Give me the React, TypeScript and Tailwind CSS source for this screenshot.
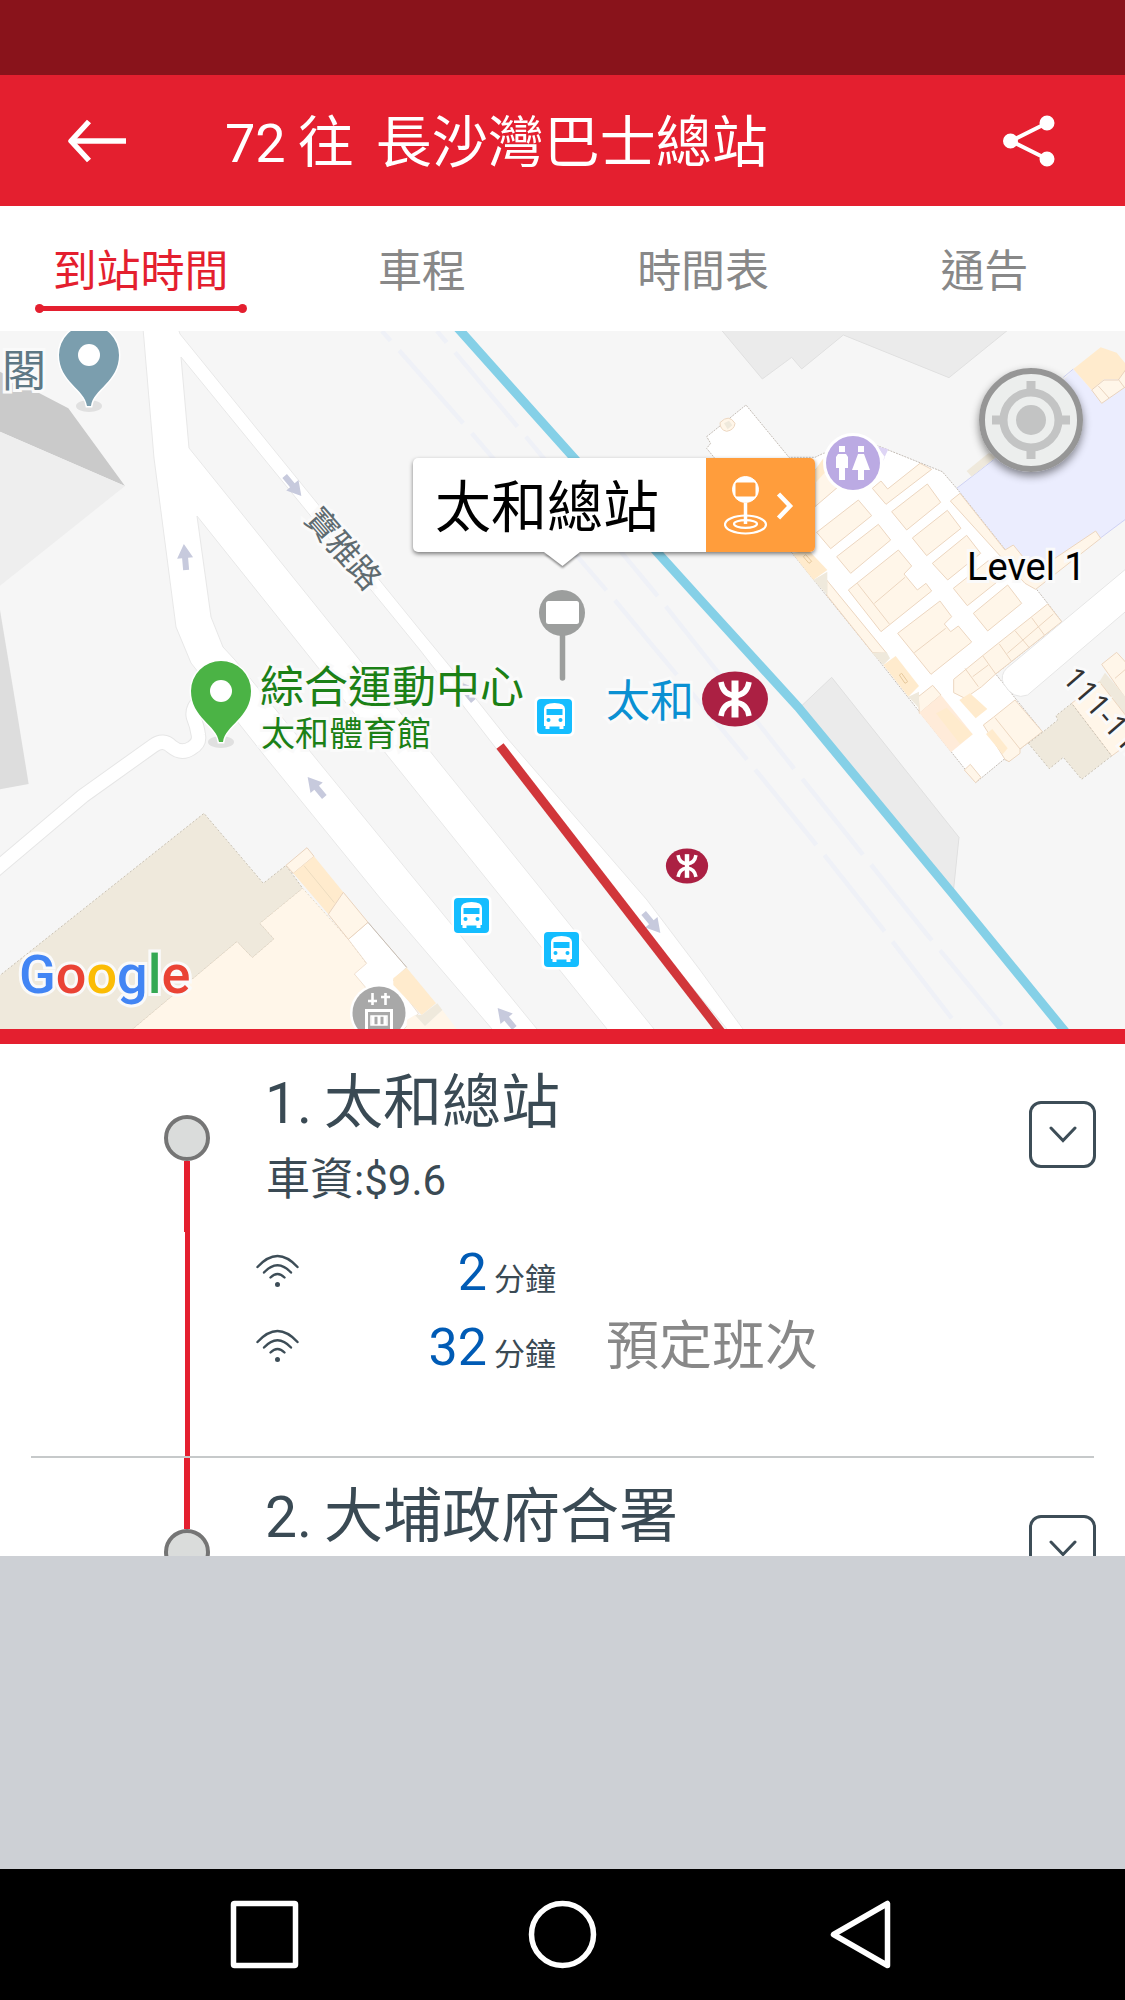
import type { ReactNode } from "react";

const CJK = "font-['Roboto','Noto_Sans_CJK_TC',sans-serif]";
const HALO = "absolute whitespace-nowrap [paint-order:stroke_fill] [-webkit-text-stroke:6px_#fafafa]";

const tabs = ["到站時間", "車程", "時間表", "通告"];

type Arrival = { minutes: number; note?: string };
type Stop = { index: number; name: string; fare?: string; arrivals: Arrival[] };

const stops: Stop[] = [
  {
    index: 1,
    name: "太和總站",
    fare: "$9.6",
    arrivals: [{ minutes: 2 }, { minutes: 32, note: "預定班次" }],
  },
  { index: 2, name: "大埔政府合署", arrivals: [] },
];

function Header() {
  return (
    <header className="flex h-[131px] items-center bg-[#e41f2f] pl-[68px] pr-[70px] text-white">
      <button type="button" aria-label="返回" className="shrink-0">
        <svg width="58" height="44" viewBox="0 0 58 44" fill="none" stroke="currentColor" strokeWidth="5.500">
          <path d="M21 2.500 3 22 21 41.500" strokeLinejoin="round" />
          <path d="M3 22H58" />
        </svg>
      </button>
      <h1 className="ml-[99px] flex flex-1 items-baseline gap-3 pt-[6px] text-[56px] leading-[72px]">
        <span className="text-[54px]">72</span>
        <span>往</span>
        <span className="ml-[10px]">長沙灣巴士總站</span>
      </h1>
      <button type="button" aria-label="分享" className="shrink-0">
        <svg width="53" height="52" viewBox="0 0 53 52" fill="currentColor" stroke="currentColor" strokeWidth="4">
          <path d="M45 8 9 26 45 44" fill="none" />
          <circle cx="8.500" cy="26" r="5.500" />
          <circle cx="45" cy="8" r="5.500" />
          <circle cx="45" cy="44" r="5.500" />
        </svg>
      </button>
    </header>
  );
}

function Tabs() {
  return (
    <nav className="grid h-[125px] grid-cols-4 bg-white">
      {tabs.map((tab, i) => (
        <button
          key={tab}
          type="button"
          className={
            i === 0
              ? "flex flex-col items-center pt-9 text-[44px] leading-[60px] text-[#e41f2f]"
              : "flex flex-col items-center pt-9 text-[44px] leading-[60px] text-[#888888]"
          }
        >
          {tab}
          {i === 0 && (
            <span className="mt-[2px] flex items-center">
              <span className="size-[9px] rounded-full bg-[#e41f2f]" />
              <span className="-mx-1 h-[5px] w-[202px] bg-[#e41f2f]" />
              <span className="size-[9px] rounded-full bg-[#e41f2f]" />
            </span>
          )}
        </button>
      ))}
    </nav>
  );
}

function Tile({ x, y, children }: { x: number; y: number; children: ReactNode }) {
  return <g transform={`translate(${x} ${y}) scale(0.33333)`}>{children}</g>;
}

function BusMark({ x, y }: { x: number; y: number }) {
  return (
    <g transform={`translate(${x} ${y})`}>
      <rect x="-2.500" y="-2.500" width="40" height="40" rx="5" fill="#fff" />
      <rect width="35" height="35" rx="4" fill="#14bdff" />
      <path
        d="M7 10Q7 4 17.500 4T28 10V27H26.500V30H22.500V27.500H12.500V30H8.500V27H7Z"
        fill="#fff"
      />
      <rect x="9.500" y="10" width="16" height="6" fill="#14bdff" />
      <circle cx="11.500" cy="21" r="2" fill="#14bdff" />
      <circle cx="23.500" cy="21" r="2" fill="#14bdff" />
    </g>
  );
}

function MtrMark({ x, y, k }: { x: number; y: number; k: number }) {
  return (
    <g transform={`translate(${x} ${y}) scale(${k})`}>
      <ellipse rx="33" ry="27.500" fill="#ab2043" />
      <g fill="none" stroke="#fff">
        <path d="M0-18.500V18.500" strokeWidth="7" />
        <path d="M-14-17Q-12-4 0-3.500 12-4 14-17M-14 17Q-12 4 0 3.500 12 4 14 17" strokeWidth="5.500" />
      </g>
    </g>
  );
}

function PlacePin({ x, y, color }: { x: number; y: number; color: string }) {
  return (
    <g transform={`translate(${x} ${y})`}>
      <ellipse cx="0" cy="51" rx="13" ry="6" fill="#e0e0e0" />
      <path
        d="M-30 0A30 30 0 0 1 30 0C30 27 4 34 2 51H-2C-4 34-30 27-30 0Z"
        fill={color}
        stroke="#fff"
        strokeWidth="3"
        paintOrder="stroke"
      />
      <circle r="11" fill="#fff" />
    </g>
  );
}

function FlowArrow({ x, y, r }: { x: number; y: number; r: number }) {
  return (
    <path
      transform={`translate(${x} ${y}) rotate(${r})`}
      d="M0-13 8 1H3V13H-3V1H-8Z"
      fill="#c7cadd"
    />
  );
}

function MapArt() {
  return (
    <svg
      className="absolute inset-0 h-full w-full"
      viewBox="0 331 1125 698"
      preserveAspectRatio="xMinYMin slice"
      aria-hidden="true"
    >
      <rect y="331" width="1125" height="698" fill="#f6f6f6" />

      {/* grey buildings, west side */}
      <Tile x={0} y={320}>
        <path d="M0 155 110 215 205 265 375 498 0 335Z" fill="#cacaca" />
        <path d="M0 335 375 498 0 797Z" fill="#eeeeee" />
        <path d="M0 870 40 1110 86 1392 0 1408Z" fill="#dddddd" />
      </Tile>

      {/* footpath and roads */}
      <Tile x={0} y={680}>
        <g fill="none" strokeLinejoin="round">
          <path d="M-20 575 250 347 460 197Q490 175 515 200 545 225 575 204 600 190 595 165 592 140 580 110 575 85 600 60" stroke="#e6e6e6" strokeWidth="46" />
          <path d="M-20 575 250 347 460 197Q490 175 515 200 545 225 575 204 600 190 595 165 592 140 580 110 575 85 600 60" stroke="#fff" strokeWidth="40" />
        </g>
      </Tile>
      <path
        d="M143 328 154 458 176 627 191 663 267 759 380 898 492 1029 500 1040H546L537 1029 380 837 313 755 235 660 223 647 211 617 197 516 320 670 387 755 607 1029 616 1040H663L654 1029 433 755 362 663 189 448 181 357 420 650 495 747 600 877 727 1029 735 1040H751L743 1029 700 970 647 900 507 738 457 675 420 630 180 334 178 328Z"
        fill="#fff"
        stroke="#e8e8e8"
      />

      {/* south-west mall */}
      <Tile x={0} y={680}>
        <path d="M-5 890 612 400 790 610 858 556 908 625 780 730 822 777 757 833 711 785 395 1050H-5Z" fill="#efe9dc" stroke="#c9c2b5" strokeWidth="3" strokeDasharray="6 6" />
        <path d="M395 1050 711 785 757 833 822 777 780 730 908 625 1045 778 1250 1050Z" fill="#fff6e9" stroke="#e6d9c6" strokeWidth="3" strokeDasharray="6 6" />
        <path d="M1045 778 1104 727 1220 862 1180 900 1255 1000 1210 1050H1140L1095 920 1063 882 1100 850Z" fill="#fff" stroke="#e9d3be" strokeWidth="2" />
        <path d="M858 556 921 503 942 529 880 580Z" fill="#fff6e9" stroke="#e9d3be" strokeWidth="3" />
        <path d="M880 580 942 529 1030 637 985 703Z" fill="#ffebcd" />
        <path d="M985 703 1030 637 1104 727 1045 778Z" fill="#fff6e9" stroke="#e9d3be" strokeWidth="3" />
        <path d="M912 557 1003 668" stroke="#ecdcc0" strokeWidth="3" />
        <path d="M1104 727 1220 862" stroke="#c4bdb6" strokeWidth="3" />
      </Tile>
      <Tile x={380} y={680}>
        <path d="M105 1005 135 1038 187 990 232 1050H80V1020Z" fill="#fff6e9" />
        <path d="M125 1005 172 970 187 990 135 1038 105 1005Z" fill="#efe9dc" />
        <path d="M40 895 80 863 168 970 125 1005 40 915Z" fill="#ffebcd" />
      </Tile>

      {/* north-east blocks */}
      <Tile x={705} y={320}>
        <path d="M45 25 172 177 260 112 290 147 415 45 732 173 915 25Z" fill="#ebebeb" stroke="#e0e0e0" strokeWidth="3" />
        <path d="M755 505 865 420 1105 147 1160 210 1190 250 1265 195V598L1185 655 990 805 890 700Z" fill="#ebedfe" />
        <path d="M1075 172 1105 147M755 505 865 420M1265 595 1185 655" stroke="#cfd2f3" strokeWidth="3" />
        <path d="M785 453 850 400 880 405 800 470Z" fill="#efe9dc" />
        <path d="M1105 147 1187 82 1235 98 1265 135V165L1240 178H1197L1160 210Z" fill="#ffebcd" />
        <path d="M1160 210 1197 180H1240L1265 145V198L1190 250ZM1180 198 1212 234M1240 178 1258 202" fill="#fff6e9" stroke="#e9d3be" strokeWidth="3" />
        <path d="M5 350 123 255 252 412H330L355 400 520 378 712 455 755 505 1028 850 1070 905 872 1062 1012 1235 945 1287 912 1325 897 1318 812 1388 503 998 262 700 5 385 17 370Z" fill="#fff" stroke="#c4bdb6" strokeWidth="3" strokeDasharray="6 3" />
        <path d="M515 378 550 388 530 430 540 412Z" fill="#ded5f5" />
        <g fill="#fff6e9" stroke="#ecd6c0" strokeWidth="3">
          <path d="M45 308Q72 280 90 310 88 330 65 334 45 330 45 308Z" />
          <path d="M330 450 365 415 400 500 330 560Z" />
          <path d="M335 637 460 540 500 587 377 686Z" />
          <path d="M395 710 520 613 557 660 437 760Z" />
          <path d="M430 810 580 690 620 738 597 762 637 810 663 790 680 813 528 935ZM457 790 553 912M508 850 600 772" />
          <path d="M578 940 705 843 740 890 718 912 737 935 760 918 800 966 678 1063ZM628 998 722 925" />
          <path d="M502 505 528 483 548 507 645 430 680 448 543 553Z" />
          <path d="M560 575 667 492 707 547 605 630Z" />
          <path d="M622 654 727 571 768 625 665 707Z" />
          <path d="M682 730 785 646 827 700 728 780Z" />
          <path d="M745 805 850 722 890 775 787 857Z" />
          <path d="M805 880 908 795 950 850 848 933Z" />
          <path d="M736 543 765 520 900 690 925 675 990 755 1172 633 1187 655 992 808 960 790Z" />
          <path d="M365 780 545 1000 503 998 365 825Z" />
          <path d="M833 1007 1028 852 1070 905 872 1062 830 1100 780 1135 746 1118V1078ZM883 972 920 1025M930 932 972 982M980 893 1018 945M907 1000 1045 882M780 1045 820 1100M803 1070 850 1035M833 1007 872 1062" />
          <path d="M640 1130 683 1096 708 1125 643 1180Z" />
          <path d="M835 1215 865 1192 930 1140 1012 1235 945 1287V1300L912 1325 900 1318ZM870 1193 945 1287" />
          <path d="M778 1350 796 1333 828 1372 812 1388Z" />
        </g>
        <path d="M643 1178 708 1125 803 1243 738 1297Z" fill="#ffebd9" />
        <g fill="#ffebcd">
          <path d="M262 700 310 690 367 750 325 780Z" />
          <path d="M535 1035 572 1008 642 1098 610 1130Z" />
          <path d="M763 1140 795 1120 847 1167 812 1195Z" />
          <path d="M693 1180 725 1163 803 1243 765 1272Z" />
          <path d="M843 1242 862 1227 908 1285 893 1303Z" />
          <path d="M330 450 355 415 362 455 330 490Z" />
        </g>
        <g fill="#efe9dc">
          <path d="M325 780 367 755V825Z" />
          <path d="M500 998 545 997 555 1015 535 1035Z" />
          <path d="M610 1130 642 1115V1165Z" />
          <path d="M57 310 72 302 82 316 68 328Z" />
        </g>
        <path d="M583 1065 590 1060 608 1085 600 1090ZM295 710 302 704 320 724 312 730Z" fill="none" stroke="#e6c89c" strokeWidth="3" />
      </Tile>
      <Tile x={705} y={600}>
        <path d="M1265-95 905 205Q885 225 895 250 925 302 968 285L1265 32Z" fill="#fff" stroke="#e6e6e6" strokeWidth="3" />
        <path d="M285 322 380 232 762 712 745 875Z" fill="#ebebeb" stroke="#e0e0e0" strokeWidth="3" />
        <path d="M1190 193 1235 157 1265 190V300ZM1230 235 1265 205" fill="#fff6e9" stroke="#ecd6c0" strokeWidth="3" />
        <path d="M1183 245 1200 218 1265 295V350Z" fill="#efe9dc" />
        <path d="M1100 310 1183 245 1265 350V435L1220 468Z" fill="#fff6e9" stroke="#ecd6c0" strokeWidth="3" />
        <path d="M970 430 1015 395 1058 360 1053 347 1100 310 1220 468 1130 538 1075 472 1033 506Z" fill="#efe9dc" stroke="#c9c2b5" strokeWidth="3" strokeDasharray="6 6" />
      </Tile>

      {/* railway */}
      <g fill="none" stroke="#eff1f7" strokeWidth="4.500">
        <path d="M382 331 463 423 613 598 745 757 814 842 882 928 960 1029" strokeDasharray="97 13" strokeDashoffset="84" />
        <path d="M437 331 517 426 656 594 792 766 860 851 929 937 1005 1029" strokeDasharray="97 13" strokeDashoffset="82" />
      </g>
      <path d="M456 326 574 458 657 552 705 605 798 707 952 893 1072 1040" fill="none" stroke="#85d0e7" strokeWidth="9" />

      <FlowArrow x={293} y={486} r={140} />
      <FlowArrow x={185} y={557} r={-5} />
      <FlowArrow x={316} y={787} r={-40} />
      <FlowArrow x={506} y={1018} r={-40} />
      <FlowArrow x={465} y={691} r={-40} />
      <FlowArrow x={652} y={923} r={140} />

      <path d="M500 746 728 1041" stroke="#d1363a" strokeWidth="9" />

      <PlacePin x={89} y={355} color="#7b9eae" />
      <PlacePin x={221} y={691} color="#4bb345" />

      <BusMark x={537} y={699} />
      <BusMark x={454} y={898} />
      <BusMark x={544} y={932} />
      <MtrMark x={735} y={699} k={1} />
      <MtrMark x={687} y={866} k={0.64} />

      {/* restroom marker */}
      <g transform="translate(853 463)">
        <circle r="30" fill="#fff" />
        <circle r="27" fill="#bbaae3" />
        <g fill="#fff">
          <rect x="-14" y="-17" width="6" height="6" />
          <path d="M-15-9H-7L-5-6V5H-8V17H-14V5H-17V-6Z" />
          <rect x="5" y="-17" width="6" height="6" />
          <path d="M5-9H11L17 7H11V17H5V7H-1Z" />
        </g>
      </g>

      {/* columbarium marker */}
      <g transform="translate(379 1013)">
        <circle r="29" fill="#fff" />
        <circle r="26.500" fill="#a8a8a8" />
        <g fill="none" stroke="#fff">
          <path d="M-6.500-20V-8M-11-12H-2M6.500-20V-8M2-16H11" strokeWidth="2.600" />
          <path d="M-12.500 16V-2.500H12.500V16" strokeWidth="3" />
          <path d="M-6 3V12M0 3V12M6 3V12" strokeWidth="3" />
          <path d="M-8 3H8V12H-8Z" strokeWidth="1.500" />
        </g>
      </g>

      {/* selected stop pole */}
      <path d="M562.500 630V678" stroke="#9c9e9d" strokeWidth="5.500" strokeLinecap="round" />
      <circle cx="562" cy="613" r="23" fill="#9c9e9d" />
      <rect x="546" y="601" width="33" height="23" rx="2.500" fill="#fff" />
    </svg>
  );
}

function StopMap() {
  return (
    <section aria-label="地圖" className="relative h-[698px] overflow-hidden bg-[#f6f6f6]">
      <MapArt />
      <span className={`${HALO} left-[2px] top-[11px] text-[44px] leading-[60px] text-[#5e7885]`}>閣</span>
      <span className={`${HALO} left-[295px] top-[196px] rotate-[49deg] text-[32px] leading-[44px] text-[#5f6b70]`}>
        寶雅路
      </span>
      <span className={`${HALO} left-[260px] top-[327px] text-[44px] leading-[60px] text-[#1b8016]`}>
        綜合運動中心
      </span>
      <span className={`${HALO} left-[261px] top-[380px] text-[34px] leading-[46px] text-[#1b8016]`}>太和體育館</span>
      <span className={`${HALO} left-[606px] top-[341px] text-[44px] leading-[60px] text-[#0a90d2]`}>太和</span>
      <span className={`${HALO} left-[967px] top-[212px] text-[38px] leading-[48px] text-black`}>Level 1</span>
      <span
        className={`${HALO} left-[1070px] top-[320px] origin-left rotate-[49deg] font-['Open_Sans',sans-serif] text-[31px] leading-[40px] text-[#333333]`}
      >
        111-112
      </span>
      <span
        aria-label="Google"
        className={`${HALO} left-[19px] top-[608px] text-[54px] font-medium leading-[72px]`}
      >
        <span className="text-[#4285f4]">G</span>
        <span className="text-[#ea4335]">o</span>
        <span className="text-[#fbbc05]">o</span>
        <span className="text-[#4285f4]">g</span>
        <span className="text-[#34a853]">l</span>
        <span className="text-[#ea4335]">e</span>
      </span>

      <button
        type="button"
        aria-label="我的位置"
        className="absolute right-[42px] top-[37px] size-[104px] rounded-full shadow-[0_4px_8px_rgba(0,0,0,0.45)]"
      >
        <svg viewBox="-52 -52 104 104" className="size-full" fill="none">
          <circle r="49" fill="#eceeed" stroke="#969696" strokeWidth="6" />
          <circle r="27.500" stroke="#c3c4c4" strokeWidth="8" />
          <path d="M0-39V-28M0 28V39M-39 0H-28M28 0H39" stroke="#c3c4c4" strokeWidth="9" />
          <circle r="15" fill="#c3c4c4" />
        </svg>
      </button>

      <button
        type="button"
        className="absolute left-[413px] top-[127px] flex h-[94px] items-stretch rounded-[5px] bg-white text-black shadow-[0_2px_4px_rgba(0,0,0,0.5)]"
      >
        <span className="w-[293px] pl-[22px] text-left text-[56px] leading-[100px]">太和總站</span>
        <span className="flex w-[109px] items-center rounded-r-[5px] bg-[#ff9d3c] pl-[18px] text-white">
          <svg width="72" height="62" viewBox="0 0 72 62" fill="none" stroke="currentColor">
            <ellipse cx="21.500" cy="50.500" rx="20.500" ry="9" strokeWidth="2.200" />
            <ellipse cx="21.500" cy="50" rx="11.500" ry="3.800" strokeWidth="2.200" />
            <circle cx="21.500" cy="15.500" r="13" fill="currentColor" strokeWidth="1" />
            <rect x="11.500" y="8.500" width="20" height="14" rx="1.500" fill="#ff9d3c" stroke="none" />
            <path d="M21.500 29V50" strokeWidth="3.500" />
            <path d="M54.500 20 66 32 54.500 44" strokeWidth="4.500" />
          </svg>
        </span>
        <svg
          className="absolute left-[130px] top-full drop-shadow-[0_2px_1px_rgba(0,0,0,0.45)]"
          width="40"
          height="15"
          viewBox="0 0 40 15"
        >
          <path d="M1 0H37L19.500 14Z" fill="#fff" />
        </svg>
      </button>
    </section>
  );
}

function SignalIcon() {
  return (
    <svg className="mb-1 shrink-0 self-center" width="43" height="34" viewBox="0 0 43 34" fill="none" stroke="#3d4d57" strokeWidth="2.400" strokeLinecap="round">
      <path d="M1.500 13Q21.500-9 41.500 13" />
      <path d="M8 18.500Q21.500 4 35 18.500" />
      <path d="M14.500 23.500Q21.500 16.500 28.500 23.500" />
      <circle cx="21.500" cy="30.500" r="1.300" fill="#3d4d57" />
    </svg>
  );
}

function StopRow({ stop, first }: { stop: Stop; first: boolean }) {
  return (
    <li className="relative flex h-[414px] pr-[29px]">
      <div className="ml-[164px] flex w-[46px] shrink-0 flex-col items-center">
        <span className={first ? "h-[71px]" : "h-[71px] w-[6px] bg-[#e41f2f]"} />
        <span className="size-[46px] shrink-0 rounded-full border-4 border-[#757575] bg-[#dadcdb]" />
        <span className="h-[71px] w-[6px] bg-[#e41f2f]" />
        <span className="w-[5px] flex-1 bg-[#e41f2f]" />
      </div>
      <div className="ml-[46px] flex-1 pt-[23px] text-[#3a4a54]">
        <h2 className="flex items-baseline gap-3 pl-[9px] text-[59px] leading-[72px]">
          <span className="text-[57px]">{stop.index}.</span>
          <span>{stop.name}</span>
        </h2>
        {stop.fare && (
          <p className="mt-[14px] pl-[10px] text-[44px] leading-[52px]">
            車資<span className="text-[42px]">:{stop.fare}</span>
          </p>
        )}
        <ul className="mt-7">
          {stop.arrivals.map((a) => (
            <li key={a.minutes} className="flex h-[75px] items-baseline leading-[75px]">
              <SignalIcon />
              <span className="w-[188px] text-right text-[52px] text-[#005bb5]">{a.minutes}</span>
              <span className="ml-[7px] text-[31px]">分鐘</span>
              {a.note && <span className="ml-[50px] text-[53px] text-[#888888]">{a.note}</span>}
            </li>
          ))}
        </ul>
      </div>
      <button
        type="button"
        aria-label={`展開 ${stop.name}`}
        className="mt-[57px] flex size-[67px] shrink-0 items-center justify-center rounded-[12px] border-[3px] border-[#3d4d57]"
      >
        <svg width="28" height="17" viewBox="0 0 28 17" fill="none" stroke="#3d4d57" strokeWidth="3" strokeLinecap="round">
          <path d="M2 2 14 14.500 26 2" />
        </svg>
      </button>
      <span className="absolute inset-x-[31px] bottom-0 h-[2px] bg-[#c6c9ca]" />
    </li>
  );
}

function SystemBar() {
  return (
    <footer className="flex h-[131px] items-center justify-between bg-black px-[230px] text-white">
      <button type="button" aria-label="最近使用">
        <svg width="69" height="69" viewBox="0 0 69 69" fill="none" stroke="currentColor" strokeWidth="5.500">
          <rect x="3.500" y="3.500" width="62" height="62" rx="1" />
        </svg>
      </button>
      <button type="button" aria-label="主畫面">
        <svg width="69" height="69" viewBox="0 0 69 69" fill="none" stroke="currentColor" strokeWidth="5.500">
          <circle cx="34.500" cy="34.500" r="31" />
        </svg>
      </button>
      <button type="button" aria-label="上一頁">
        <svg width="69" height="69" viewBox="0 0 69 69" fill="none" stroke="currentColor" strokeWidth="5.500" strokeLinejoin="round">
          <path d="M61.500 3.500V65.500L7.500 34.500Z" />
        </svg>
      </button>
    </footer>
  );
}

export default function App() {
  return (
    <div className={`${CJK} flex min-h-screen flex-col bg-[#cdd0d5]`} lang="zh-Hant-HK">
      <div className="h-[75px] bg-[#89131b]" />
      <Header />
      <Tabs />
      <StopMap />
      <main className="h-[527px] overflow-hidden border-t-[15px] border-[#e41f2f] bg-white">
        <ol>
          {stops.map((stop, i) => (
            <StopRow key={stop.index} stop={stop} first={i === 0} />
          ))}
        </ol>
      </main>
      <div className="flex-1" />
      <SystemBar />
    </div>
  );
}
